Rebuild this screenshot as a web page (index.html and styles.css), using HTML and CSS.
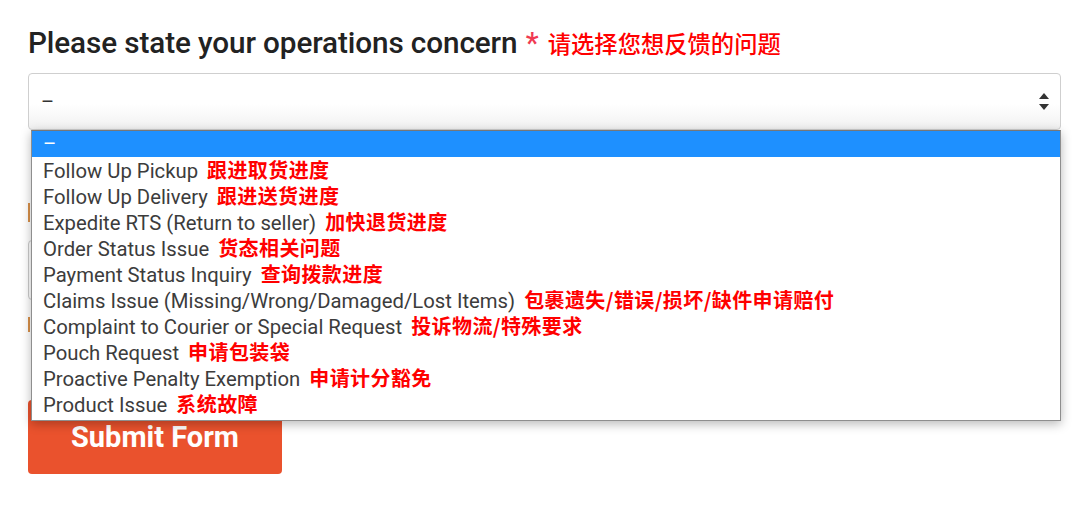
FILE: index.html
```html
<!DOCTYPE html>
<html lang="en">
<head>
<meta charset="utf-8">
<title>Operations concern form</title>
<link rel="stylesheet" href="styles.css">
</head>
<body>
<form class="form">
  <div class="field">
    <h2 class="label">Please state your operations concern <span class="req">*</span> <span class="zh">请选择您想反馈的问题</span></h2>
    <div class="select-wrap">
      <div class="select">
        <span class="value">–</span>
        <svg class="arrows" width="12" height="19" viewBox="0 0 12 19"><path d="M6 1 L11 7 H1 Z" fill="#333"/><path d="M6 18 L11 12 H1 Z" fill="#333"/></svg>
      </div>
      <ul class="dropdown">
        <li class="opt selected">–</li>
        <li class="opt">Follow Up Pickup <span class="zh">跟进取货进度</span></li>
        <li class="opt">Follow Up Delivery <span class="zh">跟进送货进度</span></li>
        <li class="opt">Expedite RTS (Return to seller) <span class="zh">加快退货进度</span></li>
        <li class="opt">Order Status Issue <span class="zh">货态相关问题</span></li>
        <li class="opt">Payment Status Inquiry <span class="zh">查询拨款进度</span></li>
        <li class="opt">Claims Issue (Missing/Wrong/Damaged/Lost Items) <span class="zh">包裹遗失/错误/损坏/缺件申请赔付</span></li>
        <li class="opt">Complaint to Courier or Special Request <span class="zh">投诉物流/特殊要求</span></li>
        <li class="opt">Pouch Request <span class="zh">申请包装袋</span></li>
        <li class="opt">Proactive Penalty Exemption <span class="zh">申请计分豁免</span></li>
        <li class="opt">Product Issue <span class="zh">系统故障</span></li>
      </ul>
    </div>
  </div>
  <div class="hidden-mark mark1"></div>
  <div class="hidden-input"></div>
  <div class="hidden-mark mark2"></div>
  <button type="button" class="submit">Submit Form</button>
</form>
</body>
</html>
```

FILE: styles.css
```css
* { box-sizing: border-box; }
html, body { margin: 0; padding: 0; background: #fff; }
body { font-family: Roboto, "Noto Sans CJK SC", sans-serif; }

.form {
  width: 1033px;
  margin-left: 28px;
  padding-top: 25px;
  display: flex;
  flex-direction: column;
}

.label {
  margin: 0;
  font-size: 29.7px;
  line-height: 36px;
  font-weight: 500;
  color: #222;
  white-space: nowrap;
  letter-spacing: -0.1px;
}
.label .req { color: #f03a52; font-size: 29px; margin-left: 1px; }
.label .zh {
  color: #ff0000;
  font-family: "Noto Sans CJK SC", sans-serif;
  font-weight: 500;
  font-size: 23.3px;
  letter-spacing: 0;
  margin-left: 2px;
}

.select-wrap {
  position: relative;
  margin-top: 12px;
}
.select {
  height: 57px;
  border: 1px solid #cfcfcf;
  border-radius: 4px;
  background: linear-gradient(#fff 0%, #fff 55%, #f1f1f1 100%);
  display: flex;
  align-items: center;
  justify-content: space-between;
  padding: 0 10px 0 12px;
}
.select .value { font-size: 20px; color: #333; }
.arrows { display: block; }

.dropdown {
  position: absolute;
  left: 3px;
  top: 57px;
  width: 1030px;
  margin: 0;
  padding: 0 0 3px;
  list-style: none;
  background: #fff;
  border: 1px solid #8e8e8e;
  border-top-color: #777;
  box-shadow: 0 3px 10px rgba(0,0,0,0.28);
  z-index: 5;
}
.opt {
  height: 26px;
  line-height: 26px;
  padding-left: 11px;
  font-size: 20.3px;
  color: #3c3c3c;
  white-space: nowrap;
}
.opt.selected { background: #1e90ff; color: #fff; }
.opt .zh {
  color: #ff0000;
  font-family: "Noto Sans CJK SC", sans-serif;
  font-weight: 700;
  font-size: 20px;
  letter-spacing: 0.4px;
  margin-left: 4px;
}

.hidden-mark {
  height: 19px;
  width: 20px;
  border-left: 2px solid #d9914a;
}
.mark1 { margin-top: 73px; }
.hidden-input {
  margin-top: 18px;
  height: 60px;
  border: 1px solid #ccc;
  border-radius: 4px;
}
.mark2 { margin-top: 17px; height: 15px; }

.submit {
  align-self: flex-start;
  margin-top: 68px;
  width: 254px;
  height: 74px;
  border: 0;
  border-radius: 4px;
  background: #ea522d;
  color: #fff;
  font-family: Roboto, sans-serif;
  font-size: 29px;
  font-weight: 700;
  padding: 0;
}
```
